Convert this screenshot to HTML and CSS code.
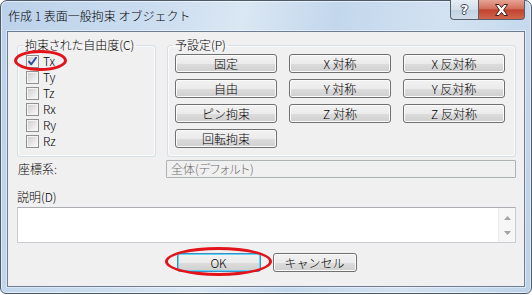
FILE: index.html
```html
<!DOCTYPE html>
<html lang="ja">
<head>
  <meta charset="UTF-8" />
  <title>作成 1 表面一般拘束 オブジェクト</title>
  <link rel="stylesheet" href="styles.css">
</head>
<body>
  <div class="window">
    <div class="titlebar">
      <span class="title">作成 1 表面一般拘束 オブジェクト</span>
      <div class="caption-buttons">
        <span class="cap-btn help">?</span>
        <span class="cap-btn close">
          <svg width="15" height="12" viewBox="0 0 15 12">
            <path d="M1.5 0.5 H5 L7.5 3.6 L10 0.5 H13.5 L9.6 6 L13.5 11.5 H10 L7.5 8.4 L5 11.5 H1.5 L5.4 6 Z" fill="#fff" stroke="#43201a" stroke-width="1" stroke-linejoin="round"/>
          </svg>
        </span>
      </div>
    </div>

    <div class="client">
      <div class="groups">
        <fieldset class="group dof">
          <legend>拘束された自由度(C)</legend>
          <div class="check-list">
            <label class="check-row">
              <span class="check">
                <svg width="11" height="11" viewBox="0 0 11 11">
                  <path d="M2 5.6 L4.3 8.3 L9 1.8" fill="none" stroke="#2d4a9c" stroke-width="1.9" stroke-linecap="round" stroke-linejoin="round"/>
                </svg>
              </span>
              Tx
              <span class="mark tx-mark"></span>
            </label>
            <label class="check-row"><span class="check"></span>Ty</label>
            <label class="check-row"><span class="check"></span>Tz</label>
            <label class="check-row"><span class="check"></span>Rx</label>
            <label class="check-row"><span class="check"></span>Ry</label>
            <label class="check-row"><span class="check"></span>Rz</label>
          </div>
        </fieldset>

        <fieldset class="group presets">
          <legend>予設定(P)</legend>
          <div class="preset-grid">
            <button class="btn">固定</button>
            <button class="btn">X 対称</button>
            <button class="btn">X 反対称</button>
            <button class="btn">自由</button>
            <button class="btn">Y 対称</button>
            <button class="btn">Y 反対称</button>
            <button class="btn">ピン拘束</button>
            <button class="btn">Z 対称</button>
            <button class="btn">Z 反対称</button>
            <button class="btn">回転拘束</button>
          </div>
        </fieldset>
      </div>

      <div class="field-row">
        <span class="field-label">座標系:</span>
        <div class="textbox disabled">全体(デフォルト)</div>
      </div>

      <div class="desc-label">説明(D)</div>
      <div class="memo">
        <div class="memo-text"></div>
        <div class="scrollbar">
          <svg width="7" height="4" viewBox="0 0 7 4"><path d="M0 4 L3.5 0 L7 4 Z" fill="#a3a3a3"/></svg>
          <svg width="7" height="4" viewBox="0 0 7 4"><path d="M0 0 L7 0 L3.5 4 Z" fill="#a3a3a3"/></svg>
        </div>
      </div>

      <div class="actions">
        <div class="ok-wrap">
          <button class="btn action ok">OK</button>
          <span class="mark ok-mark"></span>
        </div>
        <button class="btn action">キャンセル</button>
      </div>
    </div>
  </div>
</body>
</html>
```

FILE: styles.css
```css
* {
  box-sizing: border-box;
}

body {
  margin: 0;
  background: #ffffff;
  font-family: "Noto Sans CJK JP", "Noto Sans", sans-serif;
  font-size: 12px;
  font-weight: 300;
  color: #000;
  font-feature-settings: "palt";
}

.window {
  width: 532px;
  height: 294px;
  border: 1px solid #4d5a6a;
  border-radius: 7px 7px 6px 6px;
  padding: 0 6px 6px 6px;
  display: flex;
  flex-direction: column;
  background: linear-gradient(100deg, #bcd2ea 0%, #cadcef 25%, #dae7f4 42%, #c3d7ec 58%, #d3e2f2 78%, #bcd2e9 100%);
  box-shadow: inset 0 0 0 1px rgba(255, 255, 255, 0.55);
}

/* title bar */
.titlebar {
  height: 30px;
  display: flex;
  align-items: center;
  justify-content: space-between;
}

.title {
  padding-left: 1px;
  font-size: 12px;
  line-height: 16px;
  color: #000;
  font-feature-settings: normal;
}

.caption-buttons {
  align-self: flex-start;
  margin-top: -1px;
  display: flex;
}

.cap-btn {
  height: 20px;
  display: flex;
  align-items: center;
  justify-content: center;
  border: 1px solid #56606d;
  border-top: none;
}

.help {
  width: 28px;
  border-right: none;
  border-radius: 0 0 0 4px;
  background: linear-gradient(#e6edf5, #d2deea 50%, #c2d1e2 51%, #d0dce9);
  color: #fff;
  font-family: "DejaVu Sans", sans-serif;
  font-weight: bold;
  font-size: 13px;
  text-shadow: 1px 0 0 #3c4653, -1px 0 0 #3c4653, 0 1px 0 #3c4653, 0 -1px 0 #3c4653;
}

.close {
  width: 47px;
  border-radius: 0 0 4px 0;
  background: linear-gradient(#e6a493, #d3705c 45%, #c0432f 52%, #d2664d);
}

/* client area */
.client {
  height: 256px;
  border: 1px solid #6b7e96;
  background: #f0f0f0;
  padding: 6px 8px 0 9px;
  box-shadow: 0 0 0 1px rgba(255, 255, 255, 0.45);
}

.groups {
  display: flex;
  gap: 11px;
}

.group {
  margin: 0;
  padding: 0;
  border: 1px solid #d5dfe5;
  border-radius: 3px;
  box-shadow: inset 0 0 0 1px #fbfbfb;
  min-width: 0;
}

.group legend {
  margin-left: 5px;
  padding: 0 2px;
  line-height: 14px;
}

.dof {
  width: 139px;
}

.presets {
  width: 349px;
}

.check-list {
  padding: 1px 0 0 8px;
}

.check-row {
  position: relative;
  height: 16px;
  display: flex;
  align-items: center;
  gap: 4px;
  line-height: 16px;
}

.check {
  width: 13px;
  height: 13px;
  display: flex;
  align-items: center;
  justify-content: center;
  border: 1px solid #8e8f8f;
  background: linear-gradient(135deg, #cbcbcb, #f3f3f3 80%);
  box-shadow: inset 0 0 0 1px #f4f4f4;
}

.mark {
  position: absolute;
  border: 3px solid #e2131b;
  border-radius: 50%;
  pointer-events: none;
}

.tx-mark {
  left: -12px;
  top: -3px;
  width: 53px;
  height: 21px;
}

.preset-grid {
  display: grid;
  grid-template-columns: repeat(3, 102px);
  grid-auto-rows: 19px;
  column-gap: 12px;
  row-gap: 6px;
  padding: 2px 0 8px 7px;
}

.btn {
  margin: 0;
  padding: 0;
  font-family: inherit;
  font-size: 12px;
  font-weight: 300;
  line-height: 16px;
  color: #000;
  border: 1px solid #707070;
  border-radius: 3px;
  background: linear-gradient(#f2f2f2, #ebebeb 50%, #dddddd 51%, #cfcfcf);
  box-shadow: inset 0 0 0 1px #fbfbfb;
}

/* coordinate system and description */
.field-row {
  margin-top: 3px;
  display: flex;
  align-items: center;
}

.field-label {
  width: 149px;
  padding-left: 1px;
  line-height: 14px;
}

.textbox {
  width: 350px;
  height: 18px;
  padding-left: 4px;
  line-height: 16px;
  border: 1px solid #adb2b5;
  border-radius: 1px;
}

.textbox.disabled {
  color: #6d6d6d;
  background: #f0f0f0;
}

.desc-label {
  margin-top: 12px;
  line-height: 14px;
}

.memo {
  margin-top: 3px;
  width: 499px;
  height: 36px;
  display: flex;
  border: 1px solid #c9ccd1;
  border-top-color: #abadb3;
  background: #fff;
}

.memo-text {
  flex: 1;
}

.scrollbar {
  width: 17px;
  display: flex;
  flex-direction: column;
  align-items: center;
  justify-content: space-between;
  padding: 8px 0 7px;
  background: #f6f6f6;
  border-left: 1px solid #ebebeb;
}

/* dialog buttons */
.actions {
  margin-top: 10px;
  display: flex;
  justify-content: center;
  gap: 12px;
}

.ok-wrap {
  position: relative;
}

.action {
  width: 84px;
  height: 19px;
}

.ok {
  border-color: #3c8fc4;
  box-shadow: inset 0 0 0 1px #64d3f6;
}

.ok-mark {
  left: -12px;
  top: -6px;
  width: 107px;
  height: 29px;
}
```
